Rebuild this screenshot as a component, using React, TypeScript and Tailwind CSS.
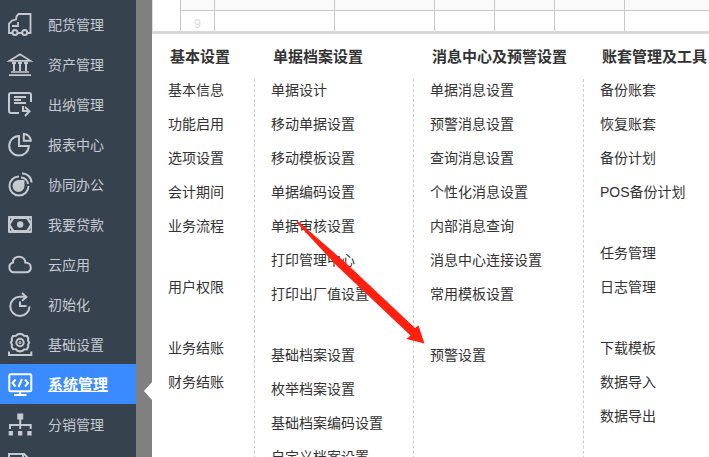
import React from 'react';

interface SideItem {
  label: string;
  icon: React.ReactNode;
  active?: boolean;
}

interface MenuColumn {
  title: string;
  groups: string[][];
}

const sideItems: SideItem[] = [
  {
    label: '配货管理',
    icon: (
      <>
        <path d="M4 21H1v-9.500l3-3 4-1 .5-3L10.500 2H22.500v19h-3M10 21h4M10 10v4H4" strokeWidth="1.8" />
        <circle cx="7" cy="20.500" r="2.500" />
        <circle cx="16.700" cy="20.500" r="2.500" />
      </>
    ),
  },
  {
    label: '资产管理',
    icon: (
      <>
        <path d="M1.500 8.800L12 2.200l10.500 6.600zM3 20h18M1 23.200h22" strokeWidth="1.700" />
        <path d="M4 11h4M10 11h4M16 11h4M6 11v8M12 11v8M18 11v8" />
      </>
    ),
  },
  {
    label: '出纳管理',
    icon: (
      <>
        <path d="M11 21H3a2 2 0 0 1-2-2V3a2 2 0 0 1 2-2h18a2 2 0 0 1 2 2v7" />
        <path d="M6 5h12M6 8h7M6 11h12M15 14v5h6M17 15l4.500 4.200L17 24" />
      </>
    ),
  },
  {
    label: '报表中心',
    icon: (
      <>
        <path d="M11 4a9.800 9.800 0 1 0 9.800 10H11z" />
        <path d="M15.800 2v6.800h7a7 7 0 0 0-7-6.800z" />
      </>
    ),
  },
  {
    label: '协同办公',
    icon: (
      <>
        <path d="M11 4.500a9.500 9.500 0 1 0 9.500 9.500M14 1.500a9 9 0 0 1 9.500 9M13 5.500a7 7 0 0 1 7 6.500" />
        <path d="M15.500 9v5a5 5 0 1 1-5-5z" fill="currentColor" />
      </>
    ),
  },
  {
    label: '我要贷款',
    icon: (
      <>
        <path
          d="M1 4h22a1 1 0 0 1 1 1v15a1 1 0 0 1-1 1H1a1 1 0 0 1-1-1V5a1 1 0 0 1 1-1zM6 7l-3.500 5.500L6 18h12.500l3.500-5.500L18.500 7zM2 6.500v2.500l1.500-2.500zM22.500 6.500v2.500L21 6.500zM2 18.500V16l1.500 2.500zM22.500 18.500V16L21 18.500z"
          fill="currentColor"
          fillRule="evenodd"
          stroke="none"
        />
        <circle cx="12.200" cy="12.500" r="3.200" fill="currentColor" stroke="none" />
      </>
    ),
  },
  {
    label: '云应用',
    icon: <path d="M6 20.300a5 5 0 0 1-1-9.800C4.500 7 7.500 4.800 11 4.800c4 0 6.200 2.700 6.300 5.700 3 0 5.500 2 5.500 5s-2 4.800-5 4.800z" />,
  },
  {
    label: '初始化',
    icon: (
      <>
        <path d="M21.500 14.500A9.600 9.600 0 1 1 12 4.700h6" />
        <path d="M14 1l4.300 3.900L14 8.800M12 9.500V14h6.500" />
      </>
    ),
  },
  {
    label: '基础设置',
    icon: (
      <>
        <path d="M9.500 2.500L12 1.800l2.500.7 1.500 1.300 3 .2 1.300 2.500-.3 2 1.200 2-1.200 2.200.3 2-1.300 2.600-3 .2-1.500 1.300-2.500.7-2.500-.7L8 17.300l-3-.2-1.300-2.600.3-2L2.800 10.500 4 8.500l-.3-2L5 4l3-.2z" />
        <circle cx="12" cy="10.500" r="3.700" />
        <circle cx="12" cy="10.500" r="0.500" />
        <path d="M1 19.500v3.600h22.300v-3.600" />
      </>
    ),
  },
  {
    label: '系统管理',
    active: true,
    icon: (
      <>
        <rect x="1.300" y="2.300" width="22" height="17" rx="1.500" />
        <path d="M7.500 7.500L4.500 11l3 3.500M17 7.500l3 3.500-3 3.500M14 7l-3.500 8M12.200 19v4M6 23h12.500" />
      </>
    ),
  },
  {
    label: '分销管理',
    icon: (
      <>
        <path d="M9.200 1.500h6v6h-6z" fill="currentColor" stroke="none" />
        <path d="M12.200 7v10M2 17v-4h20.700v4" />
        <path d="M.7 19h4.300v4.500H.7zM10 19h4.300v4.500H10zM19.300 19h4.300v4.500h-4.300z" fill="currentColor" stroke="none" />
      </>
    ),
  },
];

const columns: MenuColumn[] = [
  {
    title: '基本设置',
    groups: [['基本信息', '功能启用', '选项设置', '会计期间', '业务流程'], ['用户权限'], ['业务结账', '财务结账']],
  },
  {
    title: '单据档案设置',
    groups: [
      ['单据设计', '移动单据设置', '移动模板设置', '单据编码设置', '单据审核设置', '打印管理中心', '打印出厂值设置'],
      ['基础档案设置', '枚举档案设置', '基础档案编码设置', '自定义档案设置'],
    ],
  },
  {
    title: '消息中心及预警设置',
    groups: [
      ['单据消息设置', '预警消息设置', '查询消息设置', '个性化消息设置', '内部消息查询', '消息中心连接设置', '常用模板设置'],
      ['预警设置'],
    ],
  },
  {
    title: '账套管理及工具',
    groups: [['备份账套', '恢复账套', '备份计划', 'POS备份计划'], ['任务管理', '日志管理'], ['下载模板', '数据导入', '数据导出']],
  },
];

const SideIcon: React.FC<{ children: React.ReactNode }> = ({ children }) => (
  <svg className="w-6 h-6 shrink-0 overflow-visible" viewBox="0 0 24 24" fill="none" stroke="currentColor" strokeWidth="2" aria-hidden="true">
    {children}
  </svg>
);

const Sidebar: React.FC = () => (
  <nav className="w-[136px] shrink-0 bg-[#37424f] pt-1">
    <ul>
      {sideItems.map(item => (
        <li key={item.label}>
          <a
            href="#"
            className={
              item.active
                ? 'flex items-center gap-4 h-10 px-2 bg-[#3a8bff] text-white text-[15px] font-bold underline whitespace-nowrap'
                : 'flex items-center gap-4 h-10 px-2 text-[#c5cad0] text-sm whitespace-nowrap'
            }
          >
            <SideIcon>{item.icon}</SideIcon>
            <span className="pt-0.5">{item.label}</span>
          </a>
        </li>
      ))}
      <li className="flex items-center h-10 px-2 text-[#c5cad0]">
        <SideIcon>
          <path d="M1 23V2h15l5 5v16z" />
          <path d="M15 2v6h6" />
        </SideIcon>
      </li>
    </ul>
  </nav>
);

const SheetRows: React.FC = () => (
  <table className="ml-[27px] w-[600px] table-fixed border-collapse text-xs text-[#d9d9d9]">
    <colgroup>
      <col className="w-[34px]" />
      <col className="w-[120px]" />
      <col className="w-[100px]" />
      <col className="w-[60px]" />
      <col className="w-[60px]" />
      <col className="w-[70px]" />
      <col />
    </colgroup>
    <tbody>
      <tr className="h-[10px] bg-[#fafafa]">
        {[0, 1, 2, 3, 4, 5, 6].map(c => (
          <td key={c} className="p-0 border-x border-b border-[#c8c8c8]" />
        ))}
      </tr>
      <tr className="h-7">
        <td className="p-0 border-x border-[#c8c8c8] text-center">9</td>
        {[1, 2, 3, 4, 5, 6].map(c => (
          <td key={c} className="p-0 border-x border-[#c8c8c8]" />
        ))}
      </tr>
    </tbody>
  </table>
);

const MegaMenu: React.FC = () => (
  <section className="border-t-[3px] border-[#d8d8d8] grid grid-cols-[103px_159px_170px_1fr] text-[#333]">
    {columns.map((col, i) => (
      <div key={col.title} className="pt-[13px]">
        <h2 className="pl-[18px] h-5 leading-5 text-[15px] font-bold whitespace-nowrap">{col.title}</h2>
        <div className={i < columns.length - 1 ? 'mt-3 h-full border-r border-dashed border-[#ccc]' : 'mt-3'}>
          {col.groups.map(group => (
            <ul key={group[0]} className="pl-4 pb-[27px] text-sm">
              {group.map(name => (
                <li key={name} className="pb-3">
                  <a href="#" className="block h-[22px] leading-[22px] whitespace-nowrap">{name}</a>
                </li>
              ))}
            </ul>
          ))}
        </div>
      </div>
    ))}
  </section>
);

const App: React.FC = () => {
  return (
    <div className="relative flex h-screen overflow-hidden bg-white font-['Liberation_Sans','Noto_Sans_CJK_SC',sans-serif]">
      <Sidebar />
      <div className="relative w-4 shrink-0 bg-[#808080]">
        {/* pointer from the open panel to the active item */}
        <svg className="absolute right-0 top-[382px] w-2 h-[18px]" viewBox="0 0 8 18" fill="#fff" aria-hidden="true">
          <path d="M8 0v18L0 9z" />
        </svg>
      </div>
      <main className="flex-1 min-w-0">
        <div className="h-[31px] overflow-hidden border-l border-[#ddd]">
          <SheetRows />
        </div>
        <MegaMenu />
      </main>
      <svg className="absolute left-[297px] top-[222px] w-32 h-[122px] pointer-events-none" viewBox="0 0 128 122" fill="#ff2010" aria-hidden="true">
        <path d="M-1 0L2 0L50 42L118 106l3.500-2.500 6 18-18-4.500 4-3.500L40 44z" />
      </svg>
    </div>
  );
};

export default App;
